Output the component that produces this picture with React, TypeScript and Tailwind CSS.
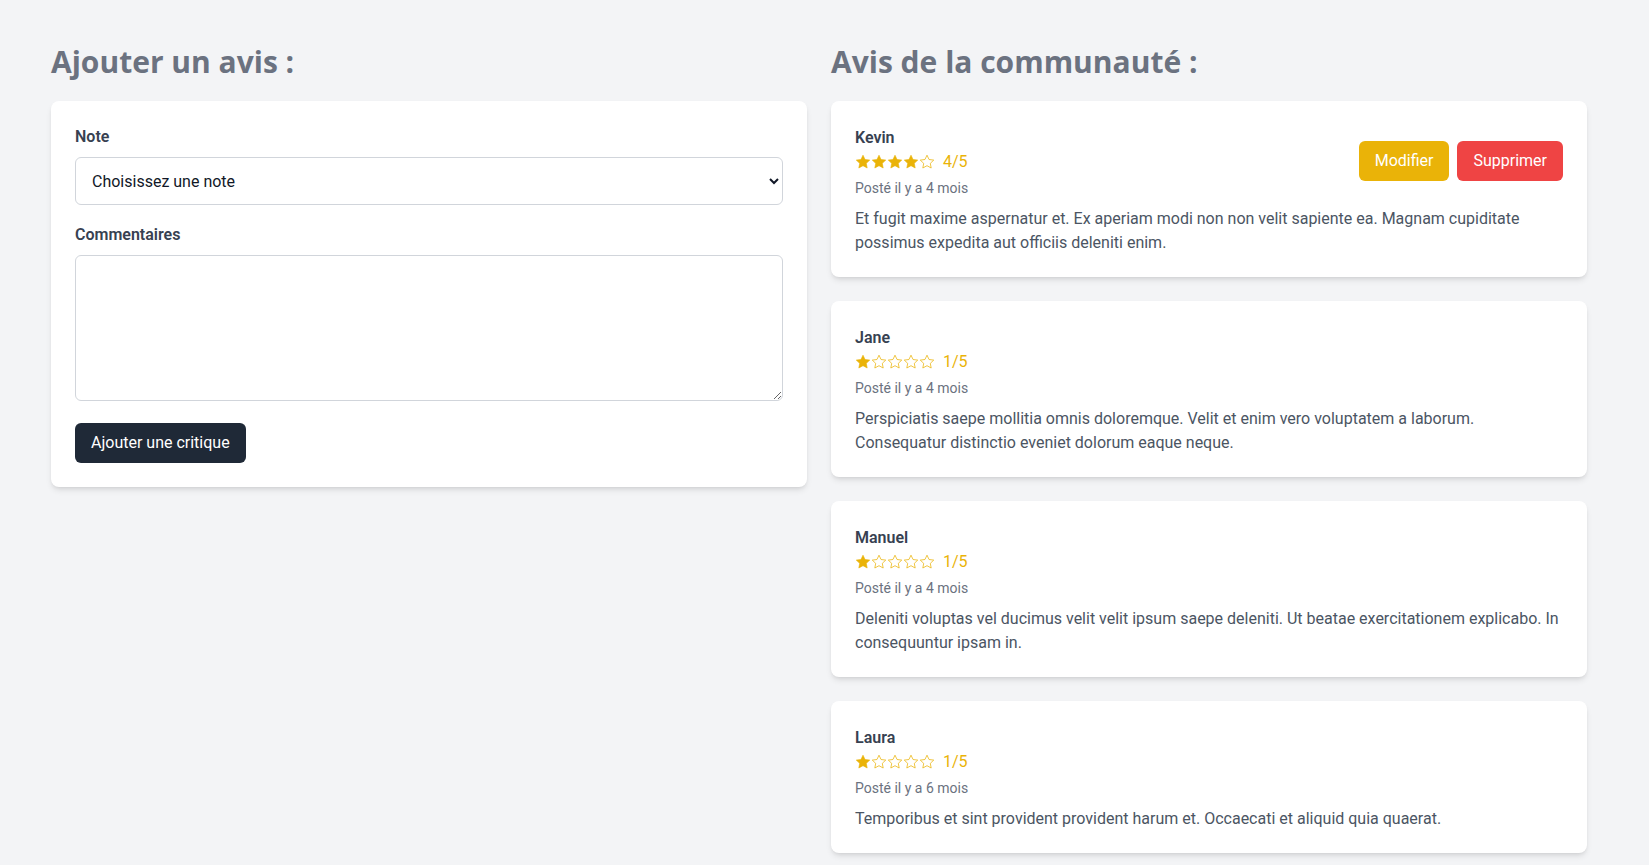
import React from 'react';

type Review = {
  name: string;
  rating: number;
  posted: string;
  text: string;
  own?: boolean;
};

const reviews: Review[] = [
  {
    name: 'Kevin',
    rating: 4,
    posted: 'Posté il y a 4 mois',
    text: 'Et fugit maxime aspernatur et. Ex aperiam modi non non velit sapiente ea. Magnam cupiditate possimus expedita aut officiis deleniti enim.',
    own: true,
  },
  {
    name: 'Jane',
    rating: 1,
    posted: 'Posté il y a 4 mois',
    text: 'Perspiciatis saepe mollitia omnis doloremque. Velit et enim vero voluptatem a laborum. Consequatur distinctio eveniet dolorum eaque neque.',
  },
  {
    name: 'Manuel',
    rating: 1,
    posted: 'Posté il y a 4 mois',
    text: 'Deleniti voluptas vel ducimus velit velit ipsum saepe deleniti. Ut beatae exercitationem explicabo. In consequuntur ipsam in.',
  },
  {
    name: 'Laura',
    rating: 1,
    posted: 'Posté il y a 6 mois',
    text: 'Temporibus et sint provident provident harum et. Occaecati et aliquid quia quaerat.',
  },
];

const STAR = 'M8 1.2l2.05 4.3 4.7.6-3.45 3.25.88 4.65L8 11.7 3.82 14l.88-4.65L1.25 6.1l4.7-.6z';

function Stars({ value }: { value: number }) {
  return (
    <div className="flex items-center">
      {[1, 2, 3, 4, 5].map((i) => (
        <svg key={i} viewBox="0 0 16 16" className="w-4 h-4">
          {i <= value ? (
            <path d={STAR} fill="#eab308" stroke="#eab308" strokeWidth="0.6" strokeLinejoin="round" />
          ) : (
            <path d={STAR} fill="none" stroke="#eab308" strokeWidth="0.75" strokeLinejoin="round" />
          )}
        </svg>
      ))}
    </div>
  );
}

function ReviewCard({ review }: { review: Review }) {
  return (
    <div className="bg-white rounded-lg shadow-md p-6">
      <div className="flex items-center justify-between">
        <div className="pt-px">
          <p className="text-base leading-6 font-semibold text-[#374151]">{review.name}</p>
          <div className="flex items-center h-6">
            <Stars value={review.rating} />
            <span className="ml-2 text-base leading-6 text-[#eab308]">{review.rating}/5</span>
          </div>
          <p className="mt-1 text-sm leading-5 text-[#6b7280]">{review.posted}</p>
        </div>
        {review.own && (
          <div className="flex gap-2 -mt-px">
            <button className="bg-[#eab308] text-white text-base leading-6 px-4 py-2 rounded-md">Modifier</button>
            <button className="bg-[#ef4444] text-white text-base leading-6 px-4 py-2 rounded-md">Supprimer</button>
          </div>
        )}
      </div>
      <p className="mt-[9px] -mb-0.5 text-base leading-6 text-[#4b5563]">{review.text}</p>
    </div>
  );
}

export default function App() {
  return (
    <div className="min-h-screen bg-[#f3f4f6] font-['Roboto','Liberation_Sans',sans-serif] pt-[44px] pb-10 pl-[51px]">
      <div className="grid grid-cols-2 gap-6 w-[1536px]">
        <div>
          <h2 className="text-3xl leading-9 font-bold font-['Open_Sans','Roboto',sans-serif] text-[#6b7280] mb-[21px]">Ajouter un avis :</h2>
          <div className="bg-white rounded-lg shadow-md p-6">
            <label className="block text-base leading-6 font-semibold text-[#374151] mb-2">Note</label>
            <select className="block w-full h-12 pl-3 pr-2 bg-white border border-[#d1d5db] rounded-md text-base text-[#111827]">
              <option>Choisissez une note</option>
              <option>1</option>
              <option>2</option>
              <option>3</option>
              <option>4</option>
              <option>5</option>
            </select>
            <label className="block mt-[18px] text-base leading-6 font-semibold text-[#374151] mb-2">Commentaires</label>
            <textarea className="block w-full h-[146px] border border-[#d1d5db] rounded-md p-3 text-base" />
            <button className="mt-[22px] bg-[#1f2937] text-white text-base leading-6 px-4 py-2 rounded-md">Ajouter une critique</button>
          </div>
        </div>
        <div>
          <h2 className="text-3xl leading-9 font-bold font-['Open_Sans','Roboto',sans-serif] text-[#6b7280] mb-[21px]">Avis de la communauté :</h2>
          <div className="flex flex-col gap-6">
            {reviews.map((r) => (
              <ReviewCard key={r.name} review={r} />
            ))}
          </div>
        </div>
      </div>
    </div>
  );
}
